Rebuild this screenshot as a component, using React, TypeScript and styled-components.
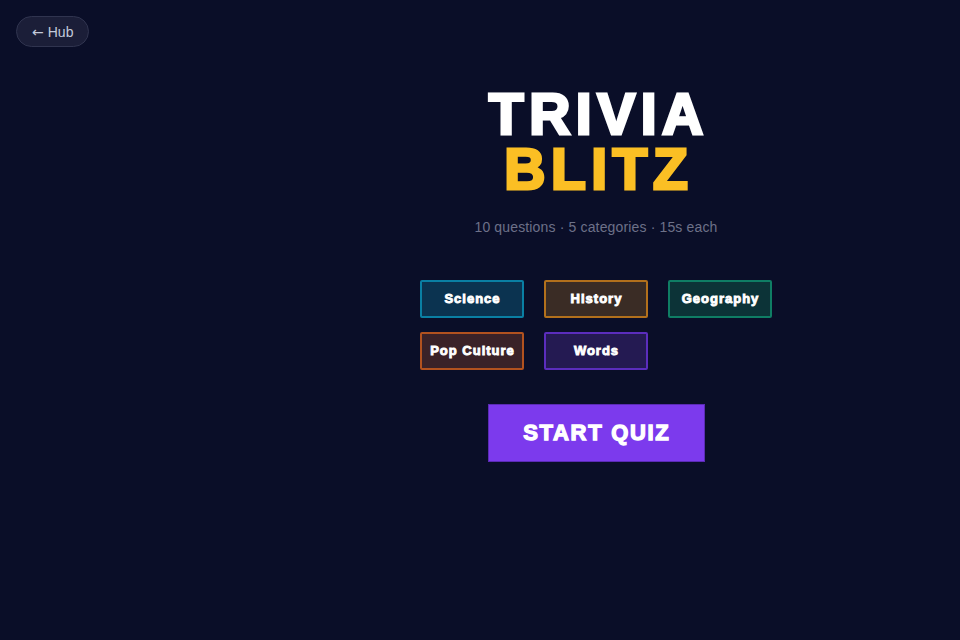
import styled, {createGlobalStyle} from 'styled-components';

const categories = [
  {name: 'Science', border: '#0a7fa3', bg: '#0b3350'},
  {name: 'History', border: '#b2701c', bg: '#3a2c25'},
  {name: 'Geography', border: '#0f7d64', bg: '#0c3337'},
  {name: 'Pop Culture', border: '#b2521f', bg: '#3a2228'},
  {name: 'Words', border: '#5b2dbd', bg: '#241a52'},
];

function App() {
  return (
    <>
      <GlobalStyle />
      <Page>
        <HubButton>
          <Arrow>←</Arrow> Hub
        </HubButton>
        <Main>
          <Title>
            <TitleLine>TRIVIA</TitleLine>
            <TitleLine $accent>BLITZ</TitleLine>
          </Title>
          <Subtitle>10 questions · 5 categories · 15s each</Subtitle>
          <ChipGrid>
            {categories.map((c) => (
              <Chip key={c.name} $border={c.border} $bg={c.bg}>
                <ChipLabel>{c.name}</ChipLabel>
              </Chip>
            ))}
          </ChipGrid>
          <StartButton>
            <StartLabel>START QUIZ</StartLabel>
          </StartButton>
        </Main>
      </Page>
    </>
  );
}

export default App;

const GlobalStyle = createGlobalStyle`
  html, body {
    margin: 0;
    padding: 0;
    background: #0a0e28;
  }
`;

const Page = styled.div`
  min-height: 640px;
  background: #0a0e28;
  padding: 16px 16px 0 16px;
  box-sizing: border-box;
  font-family: "Liberation Sans", Arial, sans-serif;
`;

const HubButton = styled.button`
  display: flex;
  align-items: center;
  gap: 4px;
  height: 31px;
  padding: 0 15px;
  border-radius: 16px;
  border: 1px solid #30344f;
  background: #1b1e38;
  color: #c3cadb;
  font-family: "Liberation Sans", Arial, sans-serif;
  font-size: 14px;
  cursor: pointer;
`;

const Arrow = styled.span`
  font-family: "DejaVu Sans", sans-serif;
  font-size: 14px;
`;

const Main = styled.main`
  display: flex;
  flex-direction: column;
  align-items: center;
  padding-left: 232px;
  margin-top: 40px;
`;

const Title = styled.h1`
  margin: 0;
  display: flex;
  flex-direction: column;
  align-items: center;
  font-family: "Arial Black", "Liberation Sans", sans-serif;
  font-weight: 900;
  font-size: 57px;
  line-height: 55px;
`;

const TitleLine = styled.span<{$accent?: boolean}>`
  color: ${(p) => (p.$accent ? '#fbbf24' : '#ffffff')};
  -webkit-text-stroke: 3px currentColor;
  letter-spacing: 5.5px;
  margin-right: -5.5px;
`;

const Subtitle = styled.p`
  margin: 22px 0 0;
  font-size: 14px;
  letter-spacing: 0.15px;
  color: #6d7188;
`;

const ChipGrid = styled.div`
  margin-top: 45px;
  display: grid;
  grid-template-columns: repeat(3, 104px);
  column-gap: 20px;
  row-gap: 14px;
`;

const Chip = styled.button<{$border: string; $bg: string}>`
  height: 38px;
  border: 2px solid ${(p) => p.$border};
  border-radius: 2px;
  background: ${(p) => p.$bg};
  color: #ffffff;
  font-family: "Arial Black", "Liberation Sans", sans-serif;
  font-weight: 900;
  font-size: 13px;
  padding: 0 0 2px;
  cursor: pointer;
`;

const ChipLabel = styled.span`
  -webkit-text-stroke: 0.9px currentColor;
  letter-spacing: 1px;
  margin-right: -1px;
`;

const StartButton = styled.button`
  margin-top: 34px;
  width: 217px;
  height: 58px;
  border: 1px solid #5b2bb5;
  background: #7c3aed;
  color: #ffffff;
  font-family: "Arial Black", "Liberation Sans", sans-serif;
  font-weight: 900;
  font-size: 22px;
  cursor: pointer;
`;

const StartLabel = styled.span`
  -webkit-text-stroke: 1.3px currentColor;
  letter-spacing: 1.7px;
  margin-right: -1.7px;
`;
